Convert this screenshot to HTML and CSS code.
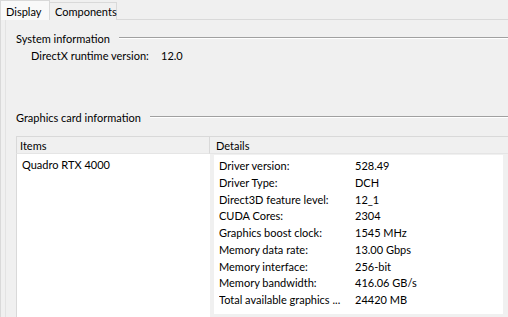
FILE: index.html
```html
<!DOCTYPE html>
<html lang="en">
<head>
    <meta charset="UTF-8">
    <title>DirectX Diagnostic - Display</title>
    <link rel="stylesheet" href="styles.css">
</head>
<body>
<!-- Tabs -->
<div class="tabs">
    <div class="tab active">Display</div>
    <div class="tab">Components</div>
    <div class="tab-fill"></div>
</div>

<div class="panel">
    <!-- System information -->
    <div class="group">
        <div class="legend"><span>System information</span><div class="rule"></div></div>
        <div class="sys-row">
            <span class="sys-label">DirectX runtime version:</span>
            <span>12.0</span>
        </div>
    </div>

    <!-- Graphics card information -->
    <div class="group gpu">
        <div class="legend"><span>Graphics card information</span><div class="rule"></div></div>
        <div class="lists">
            <div class="list items">
                <div class="list-head">Items</div>
                <div class="list-body">
                    <div class="item">Quadro RTX 4000</div>
                </div>
            </div>
            <div class="list details">
                <div class="list-head">Details</div>
                <div class="details-cell">
                    <div class="details-box">
                        <div class="row"><span class="k">Driver version:</span><span>528.49</span></div>
                        <div class="row"><span class="k">Driver Type:</span><span>DCH</span></div>
                        <div class="row"><span class="k">Direct3D feature level:</span><span>12_1</span></div>
                        <div class="row"><span class="k">CUDA Cores:</span><span>2304</span></div>
                        <div class="row"><span class="k">Graphics boost clock:</span><span>1545 MHz</span></div>
                        <div class="row"><span class="k">Memory data rate:</span><span>13.00 Gbps</span></div>
                        <div class="row"><span class="k">Memory interface:</span><span>256-bit</span></div>
                        <div class="row"><span class="k">Memory bandwidth:</span><span>416.06 GB/s</span></div>
                        <div class="row"><span class="k">Total available graphics ...</span><span>24420 MB</span></div>
                    </div>
                </div>
            </div>
        </div>
    </div>
</div>
</body>
</html>
```

FILE: styles.css
```css
* {
    margin: 0;
    padding: 0;
    box-sizing: border-box;
}
html, body {
    height: 100%;
    overflow: hidden;
}
body {
    font-family: 'Lato', 'Noto Sans', sans-serif;
    font-size: 11px;
    color: #000;
    background-color: #f0f0f0;
    display: flex;
    flex-direction: column;
}

/* Tabs */
.tabs {
    display: flex;
    align-items: flex-end;
    height: 20px;
    flex: none;
}
.tab {
    height: 18px;
    padding: 0 5px;
    line-height: 18px;
    border: 1px solid #d9d9d9;
    border-bottom: none;
    background-color: #f0f0f0;
}
.tab.active {
    height: 20px;
    width: 50px;
    padding: 0 5px;
    line-height: 21px;
    background-color: #f9f9f9;
    border-color: #d9d9d9;
}
.tab + .tab {
    border-left: none;
    width: 67px;
}
.tab-fill {
    flex: 1;
    border-bottom: 1px solid #d9d9d9;
}

/* Panel */
.panel {
    flex: 1;
    min-height: 0;
    display: flex;
    flex-direction: column;
    border-left: 1px solid #d9d9d9;
    padding-left: 4px;
}
.group {
    padding-left: 10px;
    border-left: 1px solid #e3e3e3;
}
.legend {
    display: flex;
    align-items: center;
    height: 16px;
    margin-top: 10px;
}
.legend span {
    padding-right: 9px;
}
.rule {
    flex: 1;
    height: 2px;
    border-top: 1px solid #a0a0a0;
    border-bottom: 1px solid #fff;
}
.sys-row {
    display: flex;
    padding-left: 15px;
    margin-top: 2px;
    line-height: 16px;
}
.sys-label {
    width: 130px;
}

.gpu {
    flex: 1;
    min-height: 0;
    display: flex;
    flex-direction: column;
    padding-top: 45px;
}
.gpu .legend {
    margin-top: 0;
    flex: none;
}
.lists {
    flex: 1;
    display: flex;
    margin-top: 11px;
}
.list {
    display: flex;
    flex-direction: column;
}
.list-head {
    flex: none;
    height: 18px;
    line-height: 18px;
    padding-left: 3px;
    border-top: 1px solid #d9d9d9;
    border-bottom: 1px solid #e5e5e5;
    background-color: #f0f0f0;
}
.items {
    width: 194px;
}
.items .list-head {
    border-left: 1px solid #d9d9d9;
    border-right: 1px solid #d9d9d9;
}
.list-body {
    flex: 1;
    background-color: #fff;
    border-left: 1px solid #d9d9d9;
    padding: 3px 5px;
}
.item {
    line-height: 16px;
}
.details {
    flex: 1;
}
.details .list-head {
    padding-left: 6px;
}
.details-cell {
    padding: 1px 5px 0 4px;
}
.details-box {
    background-color: #fff;
    width: 289px;
    padding: 3px 5px 5px;
}
.row {
    display: flex;
    height: 16.75px;
    line-height: 16.75px;
}
.row .k {
    width: 136px;
    white-space: nowrap;
    overflow: hidden;
}
```
